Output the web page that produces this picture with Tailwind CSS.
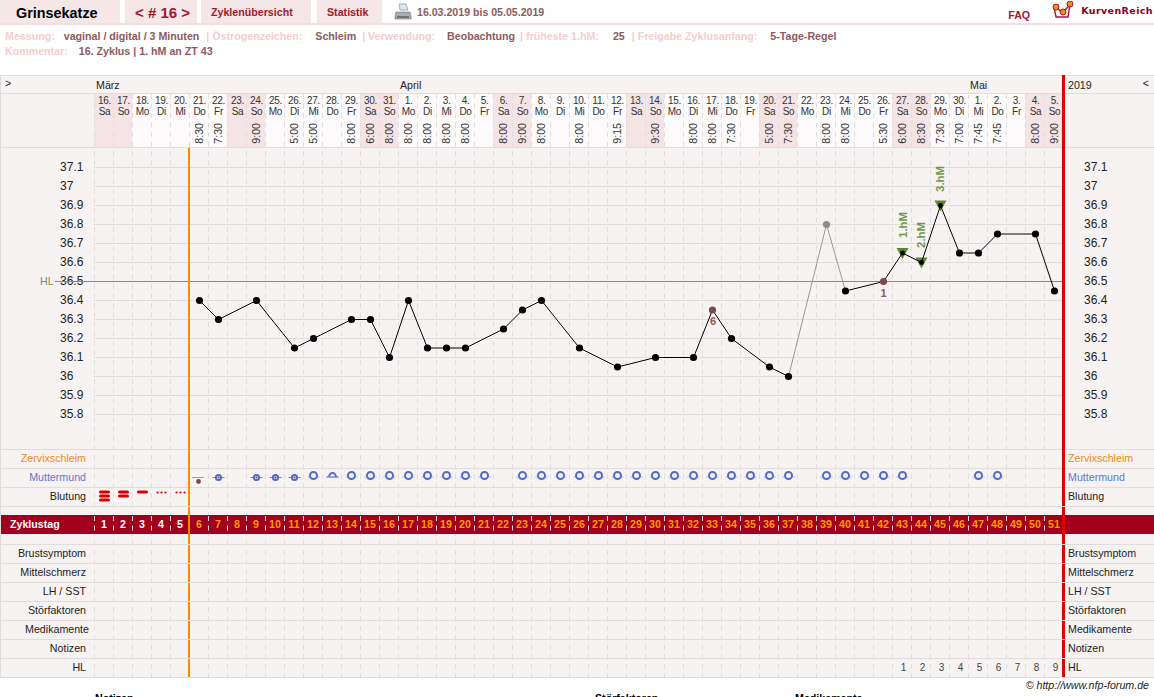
<!DOCTYPE html>
<html lang="de">
<head>
  <meta charset="UTF-8" />
  <title>Grinsekatze - Zyklus 16</title>
  <script src="https://cdn.jsdelivr.net/npm/@tailwindcss/browser@4"></script>
</head>
<body class="bg-white font-['Liberation_Sans',Arial,sans-serif] text-[10.67px] text-[#222]">
<div class="w-[1154px] h-[697px] overflow-hidden">

  <!-- Kopfzeile -->
  <div class="flex h-[25px] border-b-2 border-[#f3dfe1] font-bold">
    <div class="w-[120px] bg-[#f5e6e8] pl-[16px] text-[14.4px] leading-[26px] text-black">Grinsekatze</div>
    <div class="w-[72px] ml-[5px] bg-[#f5e6e8] pl-[10px] text-[15px] leading-[26px] text-[#a0182c]">&lt; # 16 &gt;</div>
    <div class="w-[110px] ml-[4px] bg-[#f5e6e8] pl-[10px] leading-[25px] text-[#a0182c]">Zyklenübersicht</div>
    <div class="w-[65px] ml-[6px] bg-[#f5e6e8] pl-[10px] leading-[25px] text-[#a0182c]">Statistik</div>
    <svg class="ml-[12px] mt-[3px]" width="18" height="18" viewBox="0 0 18 18">
      <path d="M5 1h7l2 6H6z" fill="#dfe7ef" stroke="#8ea0b4" stroke-width=".8"/>
      <path d="M2 9h14l1 4v3H1v-3z" fill="#a9adb2" stroke="#777" stroke-width=".6"/>
      <rect x="3" y="13" width="12" height="2" fill="#6f7378"/>
    </svg>
    <div class="ml-[5px] leading-[25px] text-[10.6px] text-[#8c5a60]">16.03.2019 bis 05.05.2019</div>
    <div class="ml-auto mt-[8px] leading-[14px] text-[#a0182c]">FAQ</div>
    <svg class="ml-[22px] mt-[1px]" width="22" height="20" viewBox="0 0 22 20">
      <path d="M2 6l2 10h12l2-13M4 6l7 6 7-9" fill="none" stroke="#b0103a" stroke-width="1.4"/>
      <circle cx="4" cy="6" r="3" fill="#f28a1e" stroke="#a0182c"/>
      <circle cx="11" cy="11" r="3" fill="#f28a1e" stroke="#a0182c"/>
      <circle cx="18" cy="3" r="3" fill="#f28a1e" stroke="#a0182c"/>
    </svg>
    <div class="ml-[7px] mr-[1px] leading-[21px] text-[9.5px] tracking-[.4px] font-['DejaVu_Sans',sans-serif] text-[#8c0020]">KurvenReich</div>
  </div>

  <!-- Zyklusdaten -->
  <div class="h-[50px] pl-[5px] pt-[4px] font-bold leading-[15px] text-[#8c5a60]">
    <div class="flex whitespace-pre">
      <span class="text-[#f6cdd0]">Messung:</span><span class="ml-[9px]">vaginal / digital / 3 Minuten</span><span class="ml-[7px] text-[#f6cdd0]">| Östrogenzeichen:</span><span class="ml-[13px]">Schleim</span><span class="ml-[6px] text-[#f6cdd0]">| Verwendung:</span><span class="ml-[12px]">Beobachtung</span><span class="ml-[5px] text-[#f6cdd0]">| früheste 1.hM:</span><span class="ml-[14px]">25</span><span class="ml-[7px] text-[#f6cdd0]">| Freigabe Zyklusanfang:</span><span class="ml-[13px]">5-Tage-Regel</span>
    </div>
    <div class="flex whitespace-pre">
      <span class="text-[#f6cdd0]">Kommentar:</span><span class="ml-[11px]">16. Zyklus | 1. hM an ZT 43</span>
    </div>
  </div>

  <!-- Kurve -->
  <div class="relative w-[1154px] border-l border-t border-[#e2dddd] bg-[#f8f3f3]">

    <div class="flex h-[18px] border-b border-[#e2dddd] leading-[18px]">
      <div class="w-[93px] pl-[4px] leading-[14px]">&gt;</div>
      <div class="flex w-[969px]">
        <div class="w-[304px] pl-[2px]">März</div>
        <div class="w-[570px] pl-[2px]">April</div>
        <div class="w-[95px] pl-[2px]">Mai</div>
      </div>
      <div class="flex w-[91px] justify-between pl-[5px] pr-[5px]"><span>2019</span><span class="leading-[14px]">&lt;</span></div>
    </div>

    <div class="flex h-[54px] border-b border-[#e2dddd]">
      <div class="w-[93px]"></div>
      <div id="dates" class="grid w-[969px] grid-cols-[repeat(51,19px)]"></div>
    </div>

    <div class="flex h-[302px] border-b border-[#e2dddd] text-[12px] leading-[19px]">
      <div id="scaleL" class="w-[93px] pl-[59px] pt-[10px]"></div>
      <div class="w-[969px]"></div>
      <div id="scaleR" class="w-[91px] pl-[21px] pt-[10px]"></div>
    </div>

    <div class="flex h-[19px] border-b border-[#e2dddd] leading-[17px] text-[#ee8a1c]">
      <div class="w-[93px] pr-[8px] text-right">Zervixschleim</div><div class="w-[969px]"></div><div class="pl-[5px]">Zervixschleim</div>
    </div>
    <div class="flex h-[19px] border-b border-[#e2dddd] leading-[17px] text-[#5a78d0]">
      <div class="w-[93px] pr-[8px] text-right">Muttermund</div><div class="w-[969px]"></div><div class="pl-[5px]">Muttermund</div>
    </div>
    <div class="flex h-[19px] border-b border-[#e2dddd] leading-[17px]">
      <div class="w-[93px] pr-[8px] text-right">Blutung</div><div class="w-[969px]"></div><div class="pl-[5px]">Blutung</div>
    </div>
    <div class="h-[8px]"></div>

    <div class="flex h-[19px] bg-[#a0001e] font-bold leading-[19px] text-white">
      <div class="w-[93px] pl-[9px]">Zyklustag</div>
      <div id="days" class="grid w-[969px] grid-cols-[repeat(51,19px)] text-center"></div>
    </div>
    <div class="h-[11px] border-b border-[#e2dddd]"></div>

    <div class="flex h-[19px] border-b border-[#e2dddd] leading-[17px]">
      <div class="w-[93px] pr-[8px] text-right">Brustsymptom</div><div class="w-[969px]"></div><div class="pl-[5px]">Brustsymptom</div>
    </div>
    <div class="flex h-[19px] border-b border-[#e2dddd] leading-[17px]">
      <div class="w-[93px] pr-[8px] text-right">Mittelschmerz</div><div class="w-[969px]"></div><div class="pl-[5px]">Mittelschmerz</div>
    </div>
    <div class="flex h-[19px] border-b border-[#e2dddd] leading-[17px]">
      <div class="w-[93px] pr-[8px] text-right">LH / SST</div><div class="w-[969px]"></div><div class="pl-[5px]">LH / SST</div>
    </div>
    <div class="flex h-[19px] border-b border-[#e2dddd] leading-[17px]">
      <div class="w-[93px] pr-[8px] text-right">Störfaktoren</div><div class="w-[969px]"></div><div class="pl-[5px]">Störfaktoren</div>
    </div>
    <div class="flex h-[19px] border-b border-[#e2dddd] leading-[17px]">
      <div class="w-[93px] pr-[5px] text-right">Medikamente</div><div class="w-[969px]"></div><div class="pl-[5px]">Medikamente</div>
    </div>
    <div class="flex h-[19px] border-b border-[#e2dddd] leading-[17px]">
      <div class="w-[93px] pr-[8px] text-right">Notizen</div><div class="w-[969px]"></div><div class="pl-[5px]">Notizen</div>
    </div>
    <div class="flex h-[19px] border-b border-[#e2dddd] leading-[17px]">
      <div class="w-[93px] pr-[8px] text-right">HL</div>
      <div id="hl" class="grid w-[969px] grid-cols-[repeat(51,19px)] text-center text-[10px] leading-[18px] text-[#444]"></div>
      <div class="pl-[5px]">HL</div>
    </div>

    <svg id="chart" class="absolute left-[-1px] top-[-1px] pointer-events-none" width="1154" height="603" viewBox="0 75 1154 603"></svg>
  </div>

  <div class="h-[13px] pr-[5px] pt-[1px] text-right italic leading-[13px]">© http://www.nfp-forum.de</div>
  <div class="flex pl-[95px] font-bold leading-[14px] text-black">
    <div class="w-[500px]">Notizen</div>
    <div class="w-[200px]">Störfaktoren</div>
    <div>Medikamente</div>
  </div>
</div>

<script>
  const dayNums = [16,17,18,19,20,21,22,23,24,25,26,27,28,29,30,31,1,2,3,4,5,6,7,8,9,10,11,12,13,14,15,16,17,18,19,20,21,22,23,24,25,26,27,28,29,30,1,2,3,4,5];
  const wd = ["Mo","Di","Mi","Do","Fr","Sa","So"];
  const times = {5:"8:30",6:"7:30",8:"9:00",10:"5:00",11:"5:00",13:"8:00",14:"6:00",15:"8:00",16:"8:00",17:"8:00",18:"8:00",19:"8:00",21:"8:00",22:"9:00",23:"8:00",25:"8:00",27:"9:15",29:"9:30",31:"8:00",32:"8:00",33:"7:30",35:"5:00",36:"7:30",38:"8:00",39:"8:00",41:"5:30",42:"6:00",43:"8:30",44:"7:30",45:"7:00",46:"7:45",47:"7:45",49:"8:00",50:"9:00"};

  // Kopfspalten, Zyklustage, HL-Nummern
  let dates = "", days = "", hl = "";
  for (let k = 0; k < 51; k++) {
    const w = (k + 5) % 7;
    const cls = w >= 5 ? "bg-[#f4e4e6]" : "bg-[#fcfafa]";
    const time = times[k] ? `<div class="mt-auto mb-[3px] self-center [writing-mode:vertical-rl] rotate-180 text-[10.67px] leading-[11px] tracking-normal">${times[k]}</div>` : "";
    dates += `<div class="flex h-[53px] flex-col pl-[2px] pt-[1px] text-center text-[10px] leading-[11px] tracking-[-.3px] text-[#333] ${cls}"><div>${dayNums[k]}.</div><div>${wd[w]}</div>${time}</div>`;
    days += `<div class="pl-[1px] ${k < 5 ? "text-white" : "text-[#ff9a00]"}">${k + 1}</div>`;
    hl += `<div class="pl-[4px]">${k >= 42 ? k - 41 : ""}</div>`;
  }
  document.getElementById("dates").innerHTML = dates;
  document.getElementById("days").innerHTML = days;
  document.getElementById("hl").innerHTML = hl;

  const scale = ["37.1","37","36.9","36.8","36.7","36.6","36.5","36.4","36.3","36.2","36.1","36","35.9","35.8"];
  const scaleHtml = scale.map(s => `<div>${s}</div>`).join("");
  document.getElementById("scaleL").innerHTML = scaleHtml;
  document.getElementById("scaleR").innerHTML = scaleHtml;

  const X = c => 104.5 + 19 * (c - 1);
  const Y = t => 167.5 + (37.1 - t) * 190;
  const temps = [[6,36.4],[7,36.3],[9,36.4],[11,36.15],[12,36.2],[14,36.3],[15,36.3],[16,36.1],[17,36.4],[18,36.15],[19,36.15],[20,36.15],[22,36.25],[23,36.35],[24,36.4],[26,36.15],[28,36.05],[30,36.1],[32,36.1],[33,36.35],[34,36.2],[36,36.05],[37,36],[39,36.8],[40,36.45],[42,36.5],[43,36.65],[44,36.6],[45,36.9],[46,36.65],[47,36.65],[48,36.75],[50,36.75],[51,36.45]];

  let s = "";
  // Temperaturraster
  for (let i = 0; i < 14; i++) s += `<line x1="94" x2="1063" y1="${167.5 + 19 * i}" y2="${167.5 + 19 * i}" stroke="#e2dddd"/>`;
  // gestrichelte Spalten
  for (let i = 0; i <= 50; i++) {
    const x = 94.5 + 19 * i;
    s += `<line x1="${x}" x2="${x}" y1="94" y2="677" stroke="#e2dddd" stroke-dasharray="5 4.5"/>`;
    s += `<line x1="${x}" x2="${x}" y1="515" y2="534" stroke="#a0001e"/>`;
    s += `<line x1="${x}" x2="${x}" y1="516" y2="534" stroke="#f4dfe0" stroke-dasharray="5 4.5"/>`;
  }
  // HL Linie
  s += `<line x1="55" x2="1062" y1="281.5" y2="281.5" stroke="#7b9a4c"/>`;
  s += `<text x="40" y="285" font-size="10.67" fill="#7d8a5a">HL</text>`;
  // Balken
  s += `<rect x="188" y="148" width="2" height="529" fill="#ff8a00"/>`;
  s += `<rect x="1062" y="75" width="3" height="602" fill="#e00000"/>`;
  [506,544,563,582,601,620,639,658,677].forEach(y => {
    s += `<rect x="188" y="${y}" width="2" height="1" fill="#e2dddd"/><rect x="1062" y="${y}" width="3" height="1" fill="#e2dddd"/>`;
  });

  // Muttermund
  const blue = "#4f6ccc", brown = "#7a4a50";
  s += `<line x1="192" x2="204" y1="477.5" y2="477.5" stroke="#b89a9c"/><circle cx="198.5" cy="481.5" r="2.4" fill="${brown}"/>`;
  [7,9,10,11].forEach(c => {
    s += `<line x1="${X(c)-6}" x2="${X(c)+6}" y1="477.5" y2="477.5" stroke="#9a7a8a"/><circle cx="${X(c)}" cy="477.5" r="2.6" fill="#f8f3f3" stroke="${blue}" stroke-width="2"/><circle cx="${X(c)}" cy="477.5" r="1" fill="${brown}"/>`;
  });
  [12,14,15,16,17,18,19,20,21,23,24,25,26,27,28,29,30,31,32,33,34,35,36,37,39,40,41,42,43,47,48].forEach(c => {
    s += `<line x1="${X(c)-6}" x2="${X(c)+6}" y1="477" y2="477" stroke="#a9b6e4"/><circle cx="${X(c)}" cy="475.5" r="3.5" fill="#f8f3f3" stroke="${blue}" stroke-width="2"/>`;
  });
  s += `<path d="M${X(13)-3.4} 476.5a3.4 3.4 0 0 1 6.8 0" fill="none" stroke="${blue}" stroke-width="2"/><line x1="${X(13)-6}" x2="${X(13)+6}" y1="477" y2="477" stroke="${blue}" stroke-width="1.2"/>`;

  // Blutung
  [[1,492],[1,496],[1,500],[2,492],[2,496],[3,492]].forEach(([c,y]) => {
    s += `<rect x="${X(c)-5.5}" y="${y-1.5}" width="11" height="3" rx="1.5" fill="#d80000"/>`;
  });
  [4,5].forEach(c => [-4,0,4].forEach(d => {
    s += `<circle cx="${X(c)+d}" cy="492.5" r="1.1" fill="#d80000"/>`;
  }));

  // Dreiecke hM
  [[43,36.65],[44,36.6],[45,36.9]].forEach(([c,t]) => {
    s += `<path d="M${X(c)-6} ${Y(t)-5}h12l-6 11z" fill="#5a8a2e"/>`;
  });

  // Kurve
  for (let i = 1; i < temps.length; i++) {
    const [c0,t0] = temps[i-1], [c1,t1] = temps[i];
    const grey = c1 === 39 || c1 === 40;
    s += `<line x1="${X(c0)}" y1="${Y(t0)}" x2="${X(c1)}" y2="${Y(t1)}" stroke="${grey ? "#999" : "#000"}"/>`;
  }
  temps.forEach(([c,t]) => {
    let fill = "#000", r = 3.6;
    if (c === 39) fill = "#8c8c8c";
    if (c === 33 || c === 42) fill = brown;
    if (c >= 43 && c <= 45) r = 2.4;
    s += `<circle cx="${X(c)}" cy="${Y(t)}" r="${r}" fill="${fill}"/>`;
  });

  // Beschriftung in der Kurve
  s += `<text x="${X(33)+0.5}" y="324.5" text-anchor="middle" font-size="11" font-weight="bold" fill="#8c5a60">6</text>`;
  s += `<text x="${X(42)}" y="297" text-anchor="middle" font-size="11" font-weight="bold" fill="#8c5a60">1</text>`;
  [["1.hM",907,238],["2.hM",925,248],["3.hM",944,192]].forEach(([t,x,y]) => {
    s += `<text transform="translate(${x} ${y}) rotate(-90)" font-size="11.5" font-weight="bold" fill="#6f9a48">${t}</text>`;
  });
  document.getElementById("chart").innerHTML = s;
</script>
</body>
</html>
